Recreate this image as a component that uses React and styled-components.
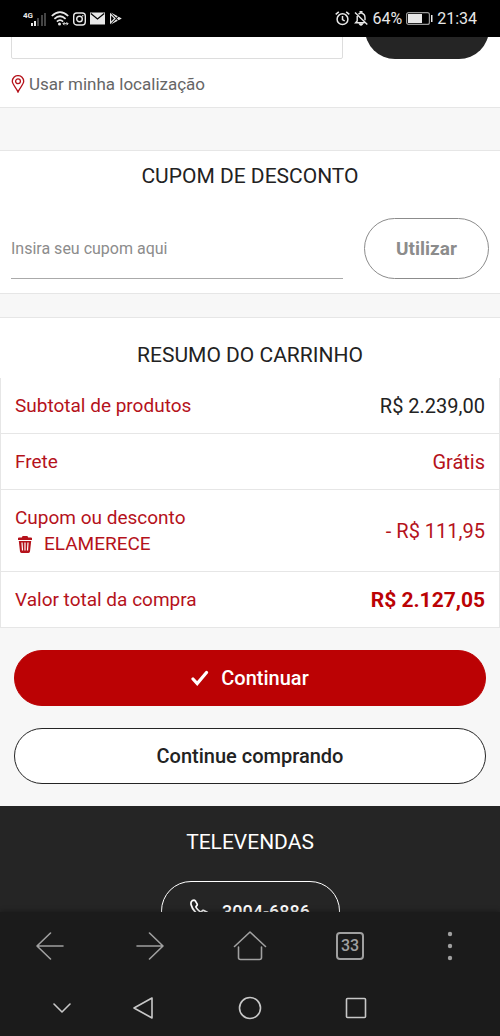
import React from 'react';
import styled, { createGlobalStyle } from 'styled-components';

const SignalIcon = () => (
	<svg width="24" height="18" viewBox="0 0 24 18" aria-hidden="true">
		<text x="0" y="8" fill="#e8e8e8" fontSize="8" fontWeight="700">
			4G
		</text>
		<g fill="#e8e8e8">
			<rect x="8" y="13" width="2" height="3" />
			<rect x="11" y="11" width="2" height="5" />
		</g>
		<g fill="#444">
			<rect x="14" y="8" width="2" height="8" />
			<rect x="18" y="5" width="2" height="11" />
			<rect x="21" y="3" width="2" height="13" />
		</g>
	</svg>
);

const WifiIcon = () => (
	<svg width="18" height="15" viewBox="0 0 18 15" fill="none" stroke="#e8e8e8" strokeWidth="1.700" aria-hidden="true">
		<path d="M.8 5Q9-2.800 17.200 5M3.400 7.900Q9 2.600 14.600 7.900M5.900 10.600Q9 7.500 12.100 10.600" />
		<circle cx="8.500" cy="13" r="1.500" fill="#e8e8e8" stroke="none" />
		<path d="M12 12.700h5M13.500 11.200L12 12.700l1.500 1.500M15.500 11.200l1.500 1.500-1.500 1.500" strokeWidth="1" />
	</svg>
);

const InstagramIcon = () => (
	<svg width="13" height="14" viewBox="0 0 13 14" fill="none" stroke="#e8e8e8" strokeWidth="1.400" aria-hidden="true">
		<rect x=".7" y="1" width="11.600" height="12" rx="3" />
		<circle cx="6.500" cy="7" r="2.800" />
		<circle cx="9.800" cy="3.700" r=".8" fill="#e8e8e8" stroke="none" />
	</svg>
);

const MailIcon = () => (
	<svg width="15" height="13" viewBox="0 0 15 13" aria-hidden="true">
		<rect y="0.500" width="15" height="12" fill="#e8e8e8" />
		<path d="M.8 1.500L7.500 7l6.700-5.500" fill="none" stroke="#000" strokeWidth="1.200" />
	</svg>
);

const PlayIcon = () => (
	<svg width="13" height="13" viewBox="0 0 13 13" aria-hidden="true">
		<path d="M1 .8v11.400L6.800 6.500zM1.800.5l7 3.800-1.500 1.500zM9.600 4.700L12.800 6.500 9.600 8.300 7.900 6.500zM1.800 12.500l7-3.800-1.500-1.500z" fill="#e8e8e8" />
		<path d="M2.100 3.600v5.800L5 6.500z" fill="#000" />
	</svg>
);

const AlarmIcon = () => (
	<svg width="15" height="15" viewBox="0 0 15 15" fill="none" stroke="#e8e8e8" strokeWidth="1.500" aria-hidden="true">
		<circle cx="7.500" cy="8.200" r="5.400" />
		<path d="M7.500 5v3.500l2.200 1.500M.7 3.300L3.800.8M14.300 3.300L11.200.8" />
	</svg>
);

const BellOffIcon = () => (
	<svg width="14" height="15" viewBox="0 0 14 15" fill="none" stroke="#e8e8e8" strokeWidth="1.400" aria-hidden="true">
		<path d="M4.500 3.200Q5.300 2.400 6.200 2.200V.8h1.600v1.400Q11 3 11 6.800v2.400M3.200 5V10L1.600 11.800H10.500M1 1.500L13.300 13.500" />
		<path d="M5.700 13h2.600q-1.300 2-2.600 0z" fill="#e8e8e8" />
	</svg>
);

const BatteryIcon = () => (
	<svg width="27" height="13" viewBox="0 0 27 13" aria-hidden="true">
		<rect x=".6" y=".6" width="22.800" height="11.800" rx="2" fill="none" stroke="#999" strokeWidth="1.200" />
		<rect x="2" y="2" width="14" height="9" fill="#e8e8e8" />
		<rect x="25" y="3" width="1.500" height="7" fill="#e8e8e8" />
	</svg>
);

const PinIcon = () => (
	<svg width="14" height="18" viewBox="0 0 14 18" fill="none" stroke="#b5121b" strokeWidth="1.300" aria-hidden="true">
		<path d="M7 17C5.800 13.500 1.300 9.500 1.300 6.300a5.700 5.700 0 0 1 11.400 0C12.700 9.500 8.200 13.500 7 17z" />
		<circle cx="7" cy="6.300" r="2.400" />
	</svg>
);

const TrashIcon = () => (
	<svg width="14" height="17" viewBox="0 0 14 17" aria-hidden="true">
		<path d="M0 2.200Q0 1.400 1 1.400H3.800Q4.200 0 5.200 0H8.800Q9.800 0 10.200 1.400H13Q14 1.400 14 2.200V4H0z" fill="#b5121b" />
		<path d="M.8 5H13.200L12 15.600Q11.900 17 10.500 17H3.500Q2.100 17 2 15.600z" fill="#b5121b" />
		<path d="M4 6.500l.5 8M7 6.500v8M10 6.500l-.5 8" stroke="#fff" strokeWidth="1.200" fill="none" />
	</svg>
);

const CheckIcon = () => (
	<svg width="18" height="16" viewBox="0 0 18 16" aria-hidden="true">
		<path d="M2 9l4.200 4.500L15.500 2.500" fill="none" stroke="#fff" strokeWidth="3.200" strokeLinecap="round" />
	</svg>
);

const PhoneIcon = () => (
	<svg width="20" height="24" viewBox="0 0 20 24" fill="none" stroke="#fff" strokeWidth="1.700" strokeLinejoin="round" aria-hidden="true">
		<path d="M1.200 3Q2.200 1.200 4 1.200Q5 1.300 5.600 2.300L7.200 5.200Q7.500 6.200 6.500 7Q5.600 7.700 6.200 8.600Q7.600 10.900 10 12.600Q11 13.200 11.800 12.200Q12.700 11 13.800 11.500L17.600 13.600Q18.800 14.400 18.300 15.800Q17 18.600 14.400 18.500C9.500 18 2.500 11.600 1.200 6Q.7 4.300 1.200 3z" />
	</svg>
);

const summary = [
	{ label: 'Subtotal de produtos', value: 'R$ 2.239,00', tone: 'dark' },
	{ label: 'Frete', value: 'Grátis' },
	{ label: 'Cupom ou desconto', value: '- R$ 111,95', coupon: 'ELAMERECE' },
	{ label: 'Valor total da compra', value: 'R$ 2.127,05', tone: 'total' },
];

const App = () => {
	return (
		<Screen>
			<GlobalStyle />
			<StatusBar>
				<StatusGroup>
					<SignalIcon />
					<WifiIcon />
					<InstagramIcon />
					<MailIcon />
					<PlayIcon />
				</StatusGroup>
				<StatusGroup>
					<AlarmIcon />
					<BellOffIcon />
					<span>64%</span>
					<BatteryIcon />
					<span>21:34</span>
				</StatusGroup>
			</StatusBar>

			<Page>
				<ShippingSection>
					<ShippingRow>
						<ZipInput type="text" aria-label="CEP" />
						<ZipButton type="button" aria-label="Calcular" />
					</ShippingRow>
					<LocationLink href="#">
						<PinIcon />
						Usar minha localização
					</LocationLink>
				</ShippingSection>

				<CouponSection>
					<Title>CUPOM DE DESCONTO</Title>
					<CouponForm onSubmit={(e) => e.preventDefault()}>
						<CouponInput type="text" placeholder="Insira seu cupom aqui" aria-label="Insira seu cupom aqui" />
						<ApplyButton type="submit">Utilizar</ApplyButton>
					</CouponForm>
				</CouponSection>

				<SummarySection>
					<Title>RESUMO DO CARRINHO</Title>
					<SummaryTable>
						<tbody>
							{summary.map((row) => (
								<tr key={row.label}>
									<Label scope="row">
										{row.label}
										{row.coupon && (
											<Coupon>
												<RemoveButton type="button" aria-label="Remover cupom">
													<TrashIcon />
												</RemoveButton>
												{row.coupon}
											</Coupon>
										)}
									</Label>
									<Value $tone={row.tone}>{row.value}</Value>
								</tr>
							))}
						</tbody>
					</SummaryTable>
				</SummarySection>

				<Actions>
					<ActionButton type="button" $primary>
						<CheckIcon />
						Continuar
					</ActionButton>
					<ActionButton type="button">Continue comprando</ActionButton>
				</Actions>

				<Footer>
					<Title>TELEVENDAS</Title>
					<PhoneLink href="tel:30046886">
						<PhoneIcon />
						3004-6886
					</PhoneLink>
				</Footer>
			</Page>

			<BottomBar>
				<BrowserNav>
					<NavButton type="button" aria-label="Voltar">
						<svg width="28" height="28" viewBox="0 0 28 28">
							<path d="M27 14H1M14.500 1L1 14l13.500 13" />
						</svg>
					</NavButton>
					<NavButton type="button" aria-label="Avançar">
						<svg width="28" height="28" viewBox="0 0 28 28">
							<path d="M1 14h26M13.500 1L27 14 13.500 27" />
						</svg>
					</NavButton>
					<NavButton type="button" aria-label="Início">
						<svg width="34" height="30" viewBox="0 0 34 30">
							<path d="M1.500 15.500L17 1l15.500 14.500M5.500 16v10.500q0 2 2 2h19q2 0 2-2V16" />
						</svg>
					</NavButton>
					<NavButton type="button" aria-label="Abas">
						<TabCount>33</TabCount>
					</NavButton>
					<NavButton type="button" aria-label="Menu">
						<svg width="6" height="30" viewBox="0 0 6 30">
							<g fill="#a0a0a0" stroke="none">
								<circle cx="3" cy="3" r="2.200" />
								<circle cx="3" cy="15" r="2.200" />
								<circle cx="3" cy="27" r="2.200" />
							</g>
						</svg>
					</NavButton>
				</BrowserNav>
				<SystemNav>
					<NavButton type="button" aria-label="Ocultar barra" $bright>
						<svg width="18" height="12" viewBox="0 0 18 12">
							<path d="M1 2l8 8 8-8" />
						</svg>
					</NavButton>
					<NavButton type="button" aria-label="Voltar no sistema" $bright>
						<svg width="22" height="24" viewBox="0 0 22 24">
							<path d="M20 2v20L2 12z" />
						</svg>
					</NavButton>
					<NavButton type="button" aria-label="Tela inicial" $bright>
						<svg width="24" height="24" viewBox="0 0 24 24">
							<circle cx="12" cy="12" r="10.500" />
						</svg>
					</NavButton>
					<NavButton type="button" aria-label="Recentes" $bright>
						<svg width="22" height="22" viewBox="0 0 22 22">
							<rect x="1.500" y="1.500" width="19" height="19" rx="1" />
						</svg>
					</NavButton>
				</SystemNav>
			</BottomBar>
		</Screen>
	);
};

export default App;

const GlobalStyle = createGlobalStyle`
	* {
		box-sizing: border-box;
	}

	body {
		margin: 0;
		background: #f7f7f7;
		font-family: Roboto, 'Liberation Sans', sans-serif;
	}

	button,
	input {
		font-family: inherit;
		margin: 0;
		padding: 0;
	}

	button {
		cursor: pointer;
	}

	svg {
		display: block;
		flex-shrink: 0;
	}
`;

const Screen = styled.div`
	display: flex;
	flex-direction: column;
	height: 100vh;
`;

const StatusBar = styled.header`
	display: flex;
	flex-shrink: 0;
	justify-content: space-between;
	height: 37px;
	padding: 0 23px;
	background: #000;
	color: #e8e8e8;
	font-size: 16px;
`;

const StatusGroup = styled.div`
	display: flex;
	align-items: center;
	gap: 4px;
`;

const Page = styled.main`
	flex: 1;
	min-height: 0;
	overflow: hidden;
	background: #f7f7f7;
	color: #222;
`;

const Section = styled.section`
	background: #fff;
	border-top: 1px solid #e6e6e6;
	border-bottom: 1px solid #e6e6e6;
`;

const ShippingSection = styled(Section)`
	border-top: none;
	padding: 0 11px 11px;
`;

/* the upper part of the row is scrolled under the status bar */
const ShippingRow = styled.div`
	display: flex;
	align-items: flex-end;
	gap: 22px;
	height: 22px;
	overflow: hidden;
`;

const ZipInput = styled.input`
	flex: 1;
	min-width: 0;
	height: 60px;
	border: 1px solid #ddd;
	border-radius: 2px;
	background: #fff;
`;

const ZipButton = styled.button`
	width: 124px;
	height: 60px;
	border: none;
	border-radius: 30px;
	background: #252525;
`;

const LocationLink = styled.a`
	display: flex;
	align-items: center;
	gap: 4px;
	margin-top: 13px;
	color: #666;
	font-size: 17px;
	line-height: 24px;
	text-decoration: none;
`;

const Title = styled.h2`
	margin: 0;
	font-size: 21px;
	font-weight: 400;
	line-height: 26px;
	text-align: center;
`;

const CouponSection = styled(Section)`
	margin-top: 42px;
	padding: 12px 11px 14px;
`;

const CouponForm = styled.form`
	display: flex;
	gap: 21px;
	margin-top: 29px;
`;

const CouponInput = styled.input`
	flex: 1;
	min-width: 0;
	border: none;
	border-bottom: 1px solid #aaa;
	border-radius: 0;
	background: none;
	color: #222;
	font-size: 16px;
	outline: none;

	&::placeholder {
		color: #8c8c8c;
		opacity: 1;
	}
`;

const ApplyButton = styled.button`
	width: 125px;
	height: 61px;
	border: 1px solid #8c8c8c;
	border-radius: 31px;
	background: #fff;
	color: #8c8c8c;
	font-size: 19px;
	font-weight: 700;
`;

const SummarySection = styled(Section)`
	margin-top: 23px;
	padding-top: 24px;
	border-bottom: none;
`;

const SummaryTable = styled.table`
	width: 100%;
	margin-top: 10px;
	border: 1px solid #e6e6e6;
	border-top: none;
	border-spacing: 0;
	line-height: 26px;

	th,
	td {
		padding: 15px 14px 14px;
	}

	tr:not(:last-child) > * {
		border-bottom: 1px solid #e6e6e6;
	}
`;

const Label = styled.th`
	color: #b5121b;
	font-size: 19px;
	font-weight: 400;
	text-align: left;
`;

const Value = styled.td`
	color: ${({ $tone }) => ($tone === 'dark' ? '#222' : $tone === 'total' ? '#bb0204' : '#b5121b')};
	font-size: ${({ $tone }) => ($tone === 'total' ? 21 : 20)}px;
	font-weight: ${({ $tone }) => ($tone === 'total' ? 700 : 400)};
	text-align: right;
	white-space: nowrap;
`;

const Coupon = styled.div`
	display: flex;
	align-items: center;
	gap: 12px;
`;

const RemoveButton = styled.button`
	margin-left: 3px;
	border: none;
	background: none;
`;

const Actions = styled.div`
	display: flex;
	flex-direction: column;
	gap: 22px;
	padding: 22px 14px;
`;

const ActionButton = styled.button`
	display: flex;
	align-items: center;
	justify-content: center;
	gap: 12px;
	height: 56px;
	border: 1px solid ${({ $primary }) => ($primary ? '#bb0204' : '#252525')};
	border-radius: 28px;
	background: ${({ $primary }) => ($primary ? '#bb0204' : '#fff')};
	color: ${({ $primary }) => ($primary ? '#fff' : '#222')};
	font-size: 20px;
	font-weight: 500;
`;

const Footer = styled.footer`
	display: flex;
	flex-direction: column;
	align-items: center;
	gap: 26px;
	padding: 23px 14px;
	background: #252525;
	color: #fff;
`;

const PhoneLink = styled.a`
	display: flex;
	align-items: center;
	justify-content: center;
	gap: 12px;
	width: 179px;
	height: 60px;
	border: 1px solid #fff;
	border-radius: 30px;
	color: #fff;
	font-size: 18px;
	font-weight: 500;
	text-decoration: none;
`;

const BottomBar = styled.div`
	flex-shrink: 0;
	background: #1b1b1b;
	box-shadow: 0 -1px 5px rgba(0, 0, 0, 0.3);
`;

const BrowserNav = styled.nav`
	display: grid;
	grid-template-columns: repeat(5, 1fr);
	height: 68px;
`;

const SystemNav = styled.nav`
	display: grid;
	grid-template-columns: 84fr 78fr 136fr 76fr 106fr;
	height: 56px;
	padding-left: 20px;
`;

const NavButton = styled.button`
	display: flex;
	align-items: center;
	justify-content: center;
	border: none;
	background: none;
	color: #a0a0a0;

	svg {
		fill: none;
		stroke: ${({ $bright }) => ($bright ? '#c8c8c8' : '#a0a0a0')};
		stroke-width: 1.6;
		stroke-linecap: round;
		stroke-linejoin: round;
	}
`;

const TabCount = styled.span`
	width: 28px;
	height: 28px;
	border: 2px solid #a0a0a0;
	border-radius: 4px;
	font-size: 16px;
	font-weight: 500;
	line-height: 24px;
`;
